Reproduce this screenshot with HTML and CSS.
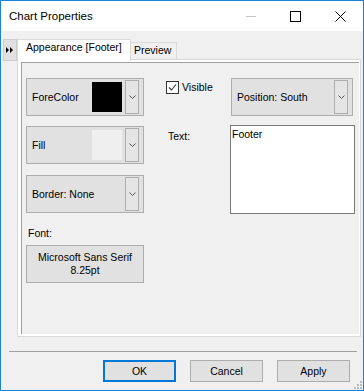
FILE: index.html
```html
<!DOCTYPE html>
<html lang="en">
<head>
  <meta charset="UTF-8">
  <meta name="viewport" content="width=device-width, initial-scale=1.0">
  <link rel="stylesheet" href="styles.css">
  <title>Chart Properties</title>
</head>
<body>
  <div class="window">
    <div class="titlebar">
      <span class="title">Chart Properties</span>
      <div class="caption-buttons">
        <span class="cap-btn"><svg width="10" height="10"><path d="M0 5.5H10" stroke="#c4c4c4"/></svg></span>
        <span class="cap-btn"><svg width="11" height="11"><rect x="0.5" y="0.5" width="10" height="10" fill="none" stroke="#000"/></svg></span>
        <span class="cap-btn"><svg width="11" height="11"><path d="M0.5 0.5L10.5 10.5M10.5 0.5L0.5 10.5" stroke="#000"/></svg></span>
      </div>
    </div>

    <div class="client">
      <div class="top">
        <div class="side-btn">
          <svg width="8" height="6"><path d="M0 0L3 3L0 6ZM4 0L7 3L4 6Z" fill="#000"/></svg>
        </div>
        <div class="tabs">
          <div class="tab-strip">
            <div class="tab active">Appearance [Footer]</div>
            <div class="tab">Preview</div>
          </div>
          <div class="tab-panel">
            <div class="tab-page">
              <div class="left-col">
                <div class="combo">
                  <span class="combo-label">ForeColor</span>
                  <span class="swatch swatch-black"></span>
                  <span class="drop"><svg width="7" height="4"><polyline points="0.5,0.5 3.5,3.5 6.5,0.5" fill="none" stroke="#555"/></svg></span>
                </div>
                <div class="combo combo-fill">
                  <span class="combo-label">Fill</span>
                  <span class="swatch swatch-light"></span>
                  <span class="drop"><svg width="7" height="4"><polyline points="0.5,0.5 3.5,3.5 6.5,0.5" fill="none" stroke="#555"/></svg></span>
                </div>
                <div class="combo combo-border">
                  <span class="combo-label">Border: None</span>
                  <span class="drop"><svg width="7" height="4"><polyline points="0.5,0.5 3.5,3.5 6.5,0.5" fill="none" stroke="#555"/></svg></span>
                </div>
                <div class="font-label">Font:</div>
                <div class="font-btn">
                  <span>Microsoft Sans Serif</span>
                  <span>8.25pt</span>
                </div>
              </div>

              <div class="right-col">
                <div class="check-row">
                  <span class="checkbox"><svg width="11" height="11"><polyline points="2,5.5 4.5,8 9,2.5" fill="none" stroke="#333" stroke-width="1.1"/></svg></span>
                  <span>Visible</span>
                </div>
                <div class="combo combo-position">
                  <span class="combo-label">Position: South</span>
                  <span class="drop"><svg width="7" height="4"><polyline points="0.5,0.5 3.5,3.5 6.5,0.5" fill="none" stroke="#555"/></svg></span>
                </div>
                <div class="text-label">Text:</div>
                <div class="text-box">Footer</div>
              </div>
            </div>
          </div>
        </div>
      </div>

      <div class="separator"></div>

      <div class="buttons">
        <div class="btn btn-default">OK</div>
        <div class="btn">Cancel</div>
        <div class="btn">Apply</div>
      </div>
    </div>

    <svg class="grip" width="11" height="11">
      <rect x="8" y="2" width="2" height="2" fill="#bcbcbc"/>
      <rect x="5" y="5" width="2" height="2" fill="#bcbcbc"/>
      <rect x="8" y="5" width="2" height="2" fill="#bcbcbc"/>
      <rect x="2" y="8" width="2" height="2" fill="#bcbcbc"/>
      <rect x="5" y="8" width="2" height="2" fill="#bcbcbc"/>
      <rect x="8" y="8" width="2" height="2" fill="#bcbcbc"/>
    </svg>
  </div>
</body>
</html>
```

FILE: styles.css
```css
* {
  box-sizing: border-box;
}

body {
  margin: 0;
  font-family: "Liberation Sans", Arial, sans-serif;
  font-size: 10.5px;
  line-height: 13px;
  color: #000;
}

.window {
  position: relative;
  width: 364px;
  height: 391px;
  border: 1px solid #1883d7;
  background-color: #f0f0f0;
  display: flex;
  flex-direction: column;
}

/* title bar */
.titlebar {
  height: 30px;
  background-color: #fff;
  display: flex;
  align-items: center;
}

.title {
  flex: 1;
  padding-left: 8px;
  font-size: 11.5px;
  color: #000;
}

.caption-buttons {
  display: flex;
}

.cap-btn {
  width: 45px;
  height: 30px;
  display: flex;
  align-items: center;
  justify-content: center;
}

/* client area */
.client {
  flex: 1;
  display: flex;
  flex-direction: column;
}

.top {
  display: flex;
  padding: 8px 2px 0 2px;
}

.side-btn {
  width: 14px;
  height: 22px;
  background-color: #e1e1e1;
  border: 1px solid #cdcdcd;
  display: flex;
  align-items: center;
  justify-content: center;
}

.tabs {
  width: 344px;
}

.tab-strip {
  position: relative;
  z-index: 1;
  display: flex;
  align-items: flex-end;
  height: 20px;
}

.tab {
  height: 17px;
  padding: 1px 0 0 3px;
  margin-left: -1px;
  width: 47px;
  border: 1px solid #d9d9d9;
  border-bottom: none;
  background-color: #f0f0f0;
}

.tab.active {
  position: relative;
  z-index: 1;
  margin-left: 0;
  width: 114px;
  height: 22px;
  margin-bottom: -2px;
  padding: 1px 0 0 8px;
  background-color: #fff;
}

.tab-panel {
  height: 278px;
  border: 1px solid #d9d9d9;
  background-color: #fff;
  padding: 2px 1px 2px 3px;
}

.tab-page {
  height: 100%;
  border-top: 1px solid #a0a0a0;
  border-left: 1px solid #a0a0a0;
  background-color: #f0f0f0;
  display: flex;
  padding: 15px 0 0 4px;
}

/* combo boxes */
.left-col {
  width: 118px;
  display: flex;
  flex-direction: column;
}

.combo {
  height: 38px;
  border: 1px solid #adadad;
  background-color: #e1e1e1;
  display: flex;
  align-items: center;
  padding: 0 4px 0 5px;
}

.combo-fill {
  margin-top: 10px;
}

.combo-border {
  margin-top: 11px;
}

.combo-label {
  flex: 1;
}

.swatch {
  width: 30px;
  height: 30px;
  margin-right: 3px;
}

.swatch-black {
  background-color: #000;
}

.swatch-light {
  background-color: #efefef;
}

.drop {
  width: 14px;
  height: 34px;
  border: 1px solid #adadad;
  background-color: #e5e5e5;
  display: flex;
  align-items: center;
  justify-content: center;
}

.font-label {
  margin-top: 14px;
  padding-left: 2px;
}

.font-btn {
  margin-top: 5px;
  height: 38px;
  border: 1px solid #adadad;
  background-color: #e1e1e1;
  display: flex;
  flex-direction: column;
  align-items: center;
  justify-content: center;
}

/* right side */
.right-col {
  margin-left: 22px;
  display: grid;
  grid-template-columns: 64px 125px;
  grid-template-rows: 38px 89px;
  row-gap: 9px;
}

.check-row {
  display: flex;
  align-items: center;
  align-self: start;
  margin-top: 3px;
}

.checkbox {
  width: 13px;
  height: 13px;
  border: 1px solid #333;
  background-color: #fff;
  margin-right: 3px;
  display: flex;
}

.combo-position {
  width: 122px;
  margin-left: 1px;
}

.text-label {
  padding: 5px 0 0 2px;
}

.text-box {
  border: 1px solid #7a7a7a;
  background-color: #fff;
  padding: 2px 1px;
}

/* bottom */
.separator {
  height: 1px;
  margin: 14px 6px 0 8px;
  background-color: #a0a0a0;
}

.buttons {
  display: flex;
  justify-content: flex-end;
  gap: 14px;
  margin-top: 8px;
  padding-right: 13px;
}

.btn {
  width: 73px;
  height: 22px;
  border: 1px solid #adadad;
  background-color: #e1e1e1;
  display: flex;
  align-items: center;
  justify-content: center;
}

.btn-default {
  border: 2px solid #0078d7;
}

.grip {
  position: absolute;
  right: 0;
  bottom: 0;
}
```
